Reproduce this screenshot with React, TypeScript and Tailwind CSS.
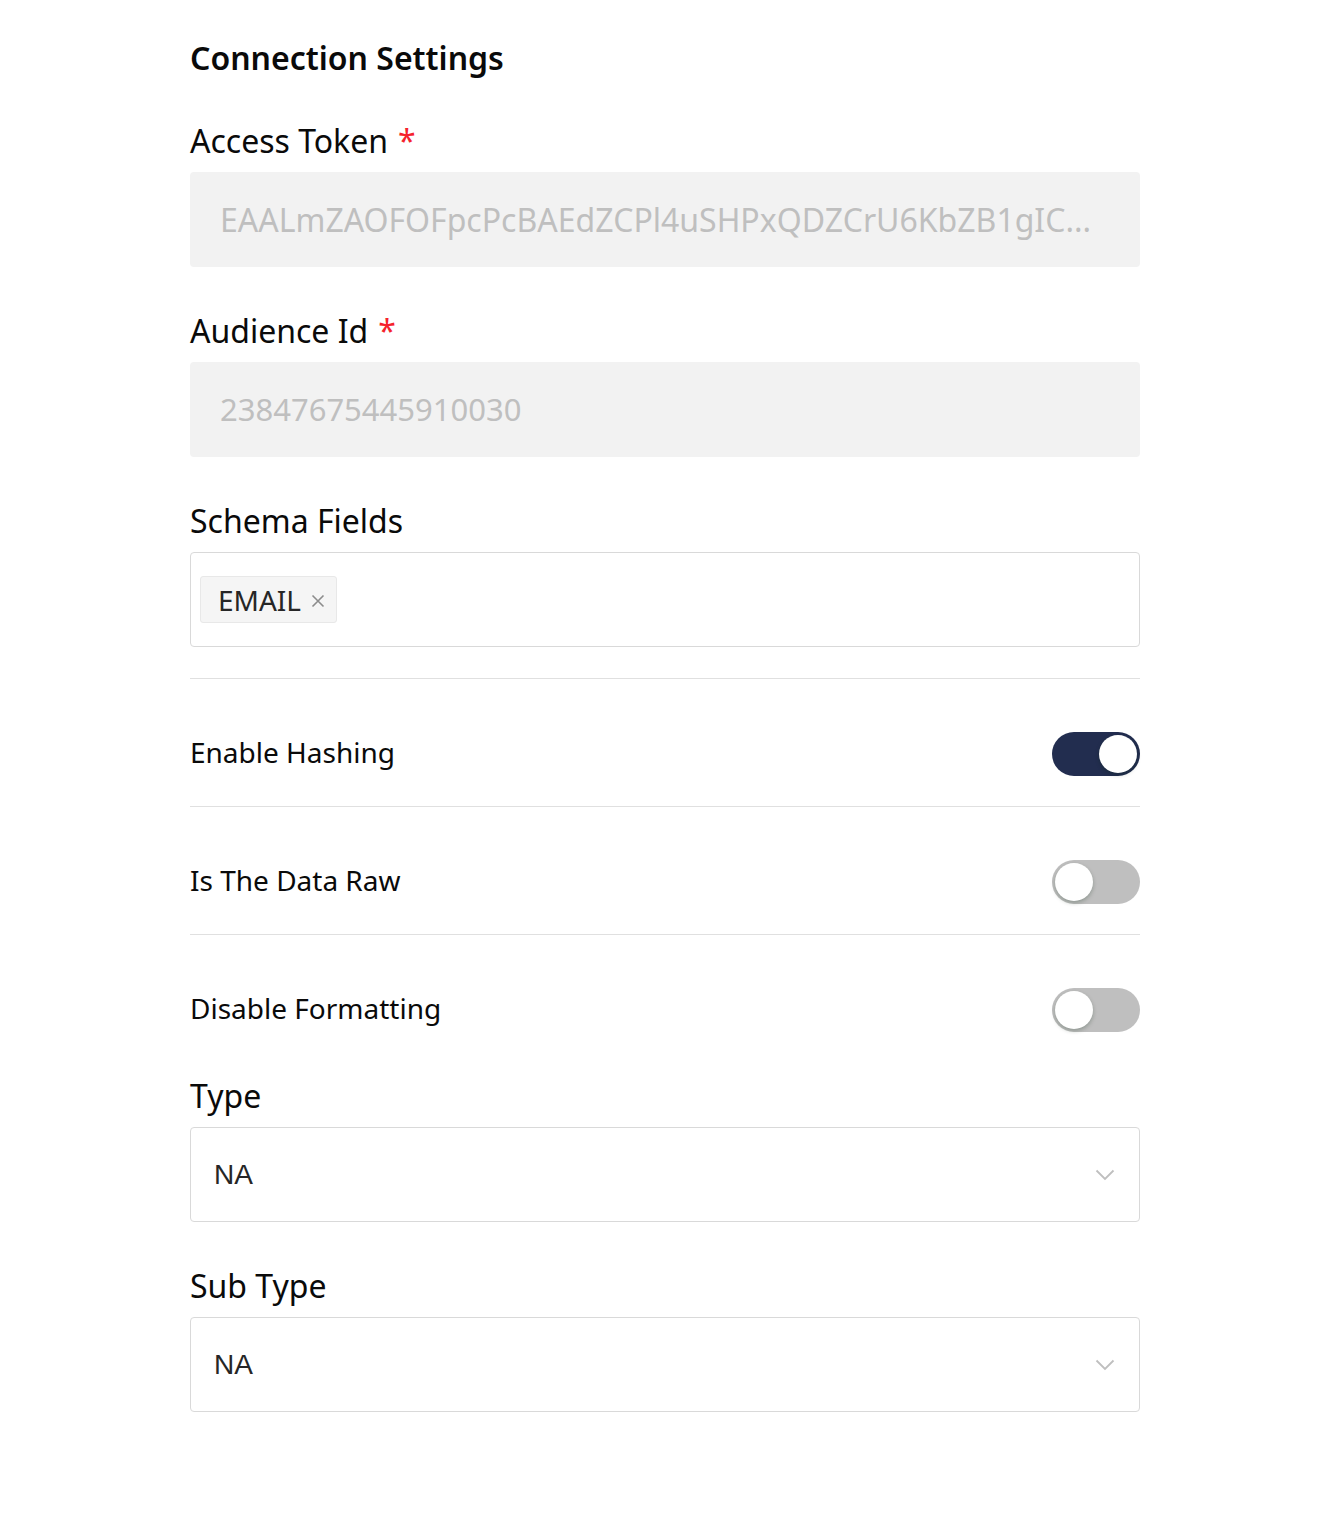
import React, { useState } from "react";

const font = { fontFamily: '"Noto Sans", "Open Sans", sans-serif' };

function Label({ text, required }: { text: string; required?: boolean }) {
  return (
    <div className="mb-[9px] h-[45px] text-[32px] leading-[45px] text-[#0a0a0a]">
      {text}
      {required && <span className="ml-[10px] text-[#f5222d]">*</span>}
    </div>
  );
}

function Toggle({ on, onClick }: { on: boolean; onClick: () => void }) {
  return (
    <button
      onClick={onClick}
      className={`relative h-[44px] w-[88px] rounded-full transition ${on ? "bg-[#222d4f]" : "bg-[#bfbfbf]"}`}
    >
      <span
        className={`absolute top-[3px] h-[38px] w-[38px] rounded-full bg-white shadow-[0_2px_4px_rgba(0,35,11,0.25)] transition-all ${on ? "left-[47px]" : "left-[3px]"}`}
      />
    </button>
  );
}

function Chevron() {
  return (
    <svg width="20" height="14" viewBox="0 0 20 14" fill="none" className="text-[#bfbfbf]">
      <path d="M1.5 2.5 L10 11 L18.5 2.5" stroke="currentColor" strokeWidth="1.8" />
    </svg>
  );
}

function Select({ value }: { value: string }) {
  return (
    <div className="flex h-[95px] items-center justify-between rounded-[4px] border border-[#d9d9d9] bg-white pl-[23px] pr-[24px]">
      <span className="text-[28px] text-[#262626]" style={{ fontFamily: '"Liberation Sans", Arial, sans-serif' }}>
        {value}
      </span>
      <Chevron />
    </div>
  );
}

export default function App() {
  const [toggles, setToggles] = useState({ hashing: true, raw: false, formatting: false });
  const rows: { key: keyof typeof toggles; label: string }[] = [
    { key: "hashing", label: "Enable Hashing" },
    { key: "raw", label: "Is The Data Raw" },
    { key: "formatting", label: "Disable Formatting" },
  ];

  return (
    <div className="min-h-[1514px] bg-white" style={font}>
      <div className="ml-[190px] w-[950px] pt-[35px]">
        <h2 className="mb-[38px] h-[45px] text-[32px] font-semibold leading-[45px] text-[#0a0a0a]">
          Connection Settings
        </h2>

        <Label text="Access Token" required />
        <div className="flex h-[95px] items-center rounded-[4px] bg-[#f2f2f2] pl-[30px] pr-[40px]">
          <span className="whitespace-nowrap text-[32px] text-[#bfbfbf]">
            EAALmZAOFOFpcPcBAEdZCPl4uSHPxQDZCrU6KbZB1gIC...
          </span>
        </div>

        <div className="mt-[41px]">
          <Label text="Audience Id" required />
          <div className="flex h-[95px] items-center rounded-[4px] bg-[#f2f2f2] pl-[30px]">
            <span className="text-[31px] text-[#bfbfbf]">23847675445910030</span>
          </div>
        </div>

        <div className="mt-[41px]">
          <Label text="Schema Fields" />
          <div className="flex h-[95px] items-center rounded-[4px] border border-[#d9d9d9] bg-white pl-[9px]">
            <span className="flex h-[47px] items-center gap-[10px] rounded-[3px] border border-[#e8e8e8] bg-[#f5f5f5] pl-[17px] pr-[11px]">
              <span className="text-[28px] text-[#262626]">EMAIL</span>
              <svg width="14" height="14" viewBox="0 0 14 14" className="mt-[3px] text-[#8c8c8c]">
                <path d="M1.5 1.5 L12.5 12.5 M12.5 1.5 L1.5 12.5" stroke="currentColor" strokeWidth="1.6" />
              </svg>
            </span>
          </div>
        </div>

        <div className="mt-[31px]">
          {rows.map((r, i) => (
            <div key={r.key} className={i < rows.length - 1 ? "border-b border-[#e0e0e0]" : ""}>
              <div className={`flex h-[44px] box-content items-center justify-between pt-[53px] ${i === 0 ? "border-t border-[#e0e0e0]" : ""} ${i < rows.length - 1 ? "pb-[30px]" : "pb-0"}`}>
                <span className="relative -top-[2px] text-[28px] leading-[40px] text-[#0a0a0a]">{r.label}</span>
                <Toggle on={toggles[r.key]} onClick={() => setToggles({ ...toggles, [r.key]: !toggles[r.key] })} />
              </div>
            </div>
          ))}
        </div>

        <div className="mt-[41px]">
          <Label text="Type" />
          <Select value="NA" />
        </div>

        <div className="mt-[41px]">
          <Label text="Sub Type" />
          <Select value="NA" />
        </div>
      </div>
    </div>
  );
}
